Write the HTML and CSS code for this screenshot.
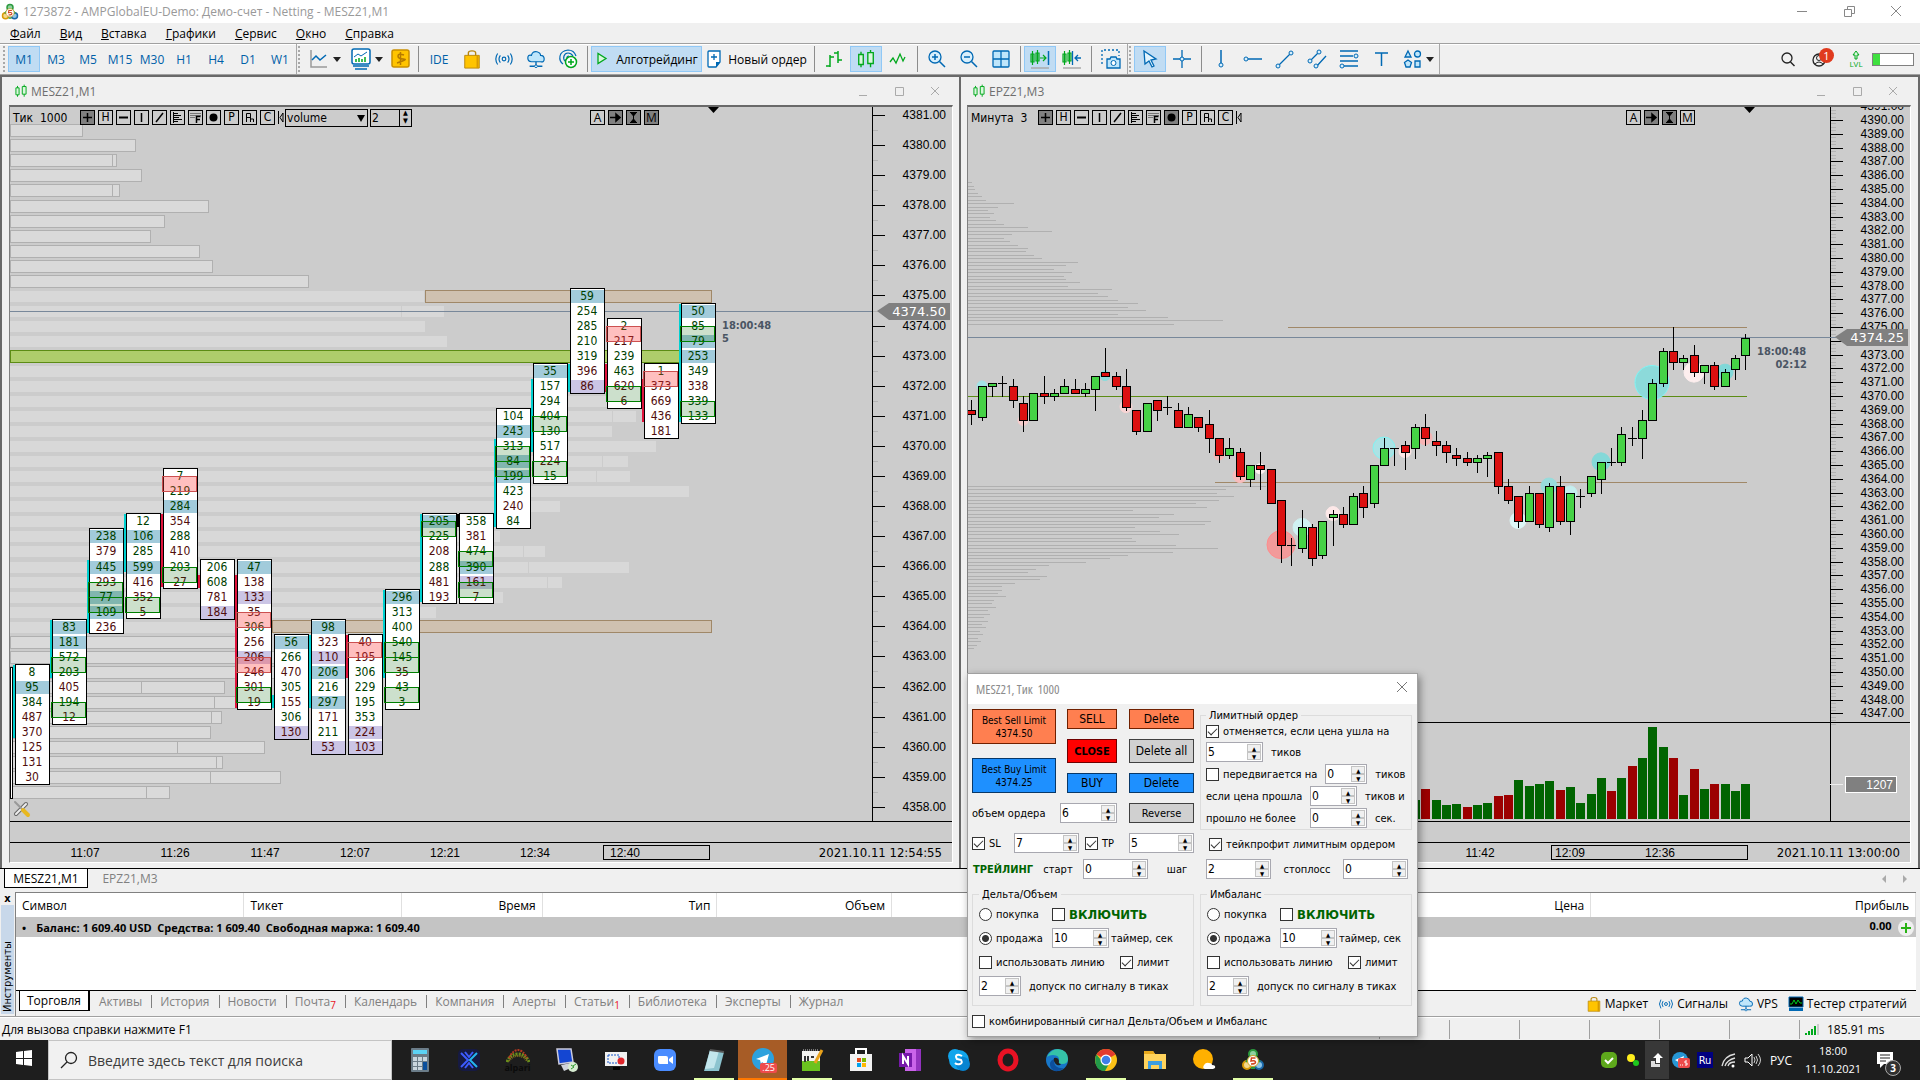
FILE: index.html
```html
<!DOCTYPE html>
<html lang="ru">
<head>
    <meta charset="UTF-8">
    <title>1273872 - AMPGlobalEU-Demo: Демо-счет - Netting - MESZ21,M1</title>
    <link rel="stylesheet" href="styles.css">
</head>
<body>
<svg class="defs" aria-hidden="true">
    <symbol id="i-candles" viewBox="0 0 22 22"><path d="M3 6h5v11H3zM5.500 3v3m0 11v3M13 4h6v12h-6zM16 1v3m0 12v4" fill="#d9f7dc" stroke="#00a81c" stroke-width="1.500"/></symbol>
    <symbol id="i-bag" viewBox="0 0 22 22"><path d="M7 8V4q0-2 4-2t4 2v4" fill="none" stroke="#b8860b" stroke-width="1.500"/><path d="M3 7h16v14H3z" fill="#ffc400" stroke="#b8860b"/><path d="M17 7v14" stroke="#d99b00" stroke-width="2"/></symbol>
    <symbol id="i-signal" viewBox="0 0 22 22"><g fill="none" stroke="#0069b4" stroke-width="1.300"><circle cx="11" cy="11" r="2"/><path d="M7 7q-3 4 0 8M15 7q3 4 0 8M4 5q-4 6 0 12M18 5q4 6 0 12"/></g></symbol>
    <symbol id="i-cloud" viewBox="0 0 22 22"><path d="M6 14q-4 0-4-4t4-3q1-5 6-4 4 1 4 4 4 0 4 4t-4 3z" fill="#bfe6fb" stroke="#0069b4" stroke-width="1.300"/><path d="M11 14v4M4 19h14" stroke="#0069b4" stroke-width="1.500"/><circle cx="11" cy="19" r="1.500" fill="#fff" stroke="#0069b4"/></symbol>
    <symbol id="i-mt5" viewBox="0 0 24 24"><circle cx="12" cy="6" r="4" fill="#8fd0a0" stroke="#2c9a3f" stroke-width="2"/><circle cx="6" cy="17" r="4" fill="#f4d98c" stroke="#d99a07" stroke-width="2"/><circle cx="18" cy="17" r="4" fill="#8cc4e8" stroke="#1a68a8" stroke-width="2"/><path d="M9 9l-4 5M15 9l4 5M10 20h4" stroke="#2c9a3f" stroke-width="2"/><circle cx="12" cy="13" r="5.500" fill="#fff" stroke="#c9a227"/><path d="M14.500 10h-4l-.5 3q4-1 4.500 1t-4.500 2" fill="none" stroke="#d2451e" stroke-width="1.500"/></symbol>
</svg>

<header class="titlebar">
    <svg class="logo" width="18" height="18"><use href="#i-mt5"/></svg>
    <h1>1273872 - AMPGlobalEU-Demo: Демо-счет - Netting - MESZ21,M1</h1>
    <div class="win-buttons">
        <button aria-label="Свернуть"><svg width="11" height="11"><path d="M0 5.500h10" stroke="#888"/></svg></button>
        <button aria-label="Окно"><svg width="11" height="11"><path d="M.5 3.500h7v7h-7zM3.500 3V.5h7v7H8" fill="none" stroke="#888"/></svg></button>
        <button aria-label="Закрыть"><svg width="11" height="11"><path d="M0 0l10 10M10 0L0 10" stroke="#888"/></svg></button>
    </div>
</header>

<nav class="menu">
    <a href="#"><u>Ф</u>айл</a>
    <a href="#"><u>В</u>ид</a>
    <a href="#"><u>В</u>ставка</a>
    <a href="#"><u>Г</u>рафики</a>
    <a href="#"><u>С</u>ервис</a>
    <a href="#"><u>О</u>кно</a>
    <a href="#"><u>С</u>правка</a>
</nav>

<div class="toolbar">
    <span class="grip"></span>
    <button class="active">M1</button>
    <button>M3</button>
    <button>M5</button>
    <button>M15</button>
    <button>M30</button>
    <button>H1</button>
    <button>H4</button>
    <button>D1</button>
    <button>W1</button>
    <span class="sep tight"></span>
    <span class="grip"></span>
    <button class="drop" aria-label="Тип линии"><svg width="22" height="22"><path d="M3 2v17h16" fill="none" stroke="#999" stroke-width="1.500"/><path d="M4 12l4-4 4 4 6-5" fill="none" stroke="#0069b4" stroke-width="1.500"/></svg><i class="caret"></i></button>
    <button class="drop" aria-label="Шаблоны"><svg width="22" height="22"><rect x="2" y="1" width="18" height="15" rx="2" fill="#fff" stroke="#0069b4" stroke-width="1.500"/><path d="M4 9l4-3 3 2 6-4" fill="none" stroke="#0069b4"/><path d="M6 14v-3m3 3v-4m3 4v-3m3 3V9" stroke="#00a81c" stroke-width="1.500"/><path d="M3 18h16M5 21h12" stroke="#0069b4" stroke-width="1.500"/></svg><i class="caret"></i></button>
    <button class="narrow" aria-label="Доллар"><svg width="20" height="20"><rect x="1" y="1" width="17" height="17" rx="2" fill="#ffc400" stroke="#c98f00" stroke-width="1.500"/><path d="M13 6q-6-2-6 1t5.500 3-6.500 4M9.500 3v13" fill="none" stroke="#b57a00" stroke-width="1.500"/></svg></button>
    <span class="sep"></span>
    <button class="wide">IDE</button>
    <button aria-label="Маркет"><svg width="20" height="20"><use href="#i-bag"/></svg></button>
    <button aria-label="Сигналы"><svg width="20" height="20"><use href="#i-signal"/></svg></button>
    <button aria-label="VPS"><svg width="20" height="20"><use href="#i-cloud"/></svg></button>
    <button aria-label="Радар"><svg width="22" height="22"><g fill="none" stroke="#0069b4" stroke-width="1.200"><path d="M6 16Q2 13 3 8t8-6q6 0 8 6M8 13q-2-2-1-5t4-3q3 0 5 3M10 10q0-2 2-2"/></g><circle cx="14" cy="14" r="5.500" fill="#fff" stroke="#00a81c" stroke-width="1.500"/><path d="M14 11v6M11 14h6" stroke="#00a81c" stroke-width="1.500"/></svg></button>
    <span class="sep"></span>
    <button class="active text"><svg width="14" height="14"><path d="M3 1.500v10l8-5z" fill="#d9f7dc" stroke="#00a81c" stroke-width="1.300"/></svg>Алготрейдинг</button>
    <button class="text new-order"><svg width="18" height="20"><path d="M2 3q0-1 1-1h11v11l-4 5H3q-1 0-1-1z" fill="#fff" stroke="#0069b4" stroke-width="1.300"/><path d="M14 13l-4 5v-5z" fill="#0069b4"/><path d="M8 5v6M5 8h6" stroke="#0069b4" stroke-width="1.300"/></svg>Новый ордер</button>
    <span class="sep"></span>
    <button aria-label="Бары"><svg width="20" height="20"><path d="M6 6v12M2 17h4M6 8h4M14 2v12M10 4h4M14 11h4" fill="none" stroke="#00a81c" stroke-width="1.500"/></svg></button>
    <button class="active" aria-label="Свечи"><svg width="20" height="20"><use href="#i-candles"/></svg></button>
    <button aria-label="Линия"><svg width="20" height="20"><path d="M2 13l3-4 3 5 4-9 3 7 2-4" fill="none" stroke="#00a81c" stroke-width="1.300"/></svg></button>
    <span class="sep"></span>
    <button aria-label="Увеличить"><svg width="20" height="20"><circle cx="8" cy="8" r="6" fill="#d8effc" stroke="#0069b4" stroke-width="1.300"/><path d="M12.500 12.500L18 18M8 5v6M5 8h6" stroke="#0069b4" stroke-width="1.500"/></svg></button>
    <button aria-label="Уменьшить"><svg width="20" height="20"><circle cx="8" cy="8" r="6" fill="#d8effc" stroke="#0069b4" stroke-width="1.300"/><path d="M12.500 12.500L18 18M5 8h6" stroke="#0069b4" stroke-width="1.500"/></svg></button>
    <button aria-label="Плитка"><svg width="20" height="20"><rect x="2" y="2" width="16" height="16" rx="1" fill="#bfe6fb" stroke="#0069b4" stroke-width="1.300"/><path d="M10 2v16M2 10h16" stroke="#0069b4" stroke-width="1.300"/></svg></button>
    <span class="sep"></span>
    <button class="active" aria-label="Автопрокрутка"><svg width="20" height="22"><path d="M1 6h3v8H1zM2.500 3v14M6 5h3v8H6zM7.500 2v14M10 10h6m-3-3l3 3-3 3" fill="none" stroke="#00a81c" stroke-width="1.200"/><path d="M18.500 3v14" stroke="#0069b4" stroke-width="1.500"/><path d="M1 20h18" stroke="#aaa" stroke-width="1.500"/></svg></button>
    <button aria-label="Сдвиг"><svg width="20" height="22"><path d="M1 6h3v8H1zM2.500 3v14M6 5h3v8H6zM7.500 2v14" fill="none" stroke="#00a81c" stroke-width="1.200"/><path d="M10.500 3v14M19 10h-6m3-3l-3 3 3 3" fill="none" stroke="#0069b4" stroke-width="1.300"/><path d="M1 20h18" stroke="#aaa" stroke-width="1.500"/></svg></button>
    <span class="sep"></span>
    <button aria-label="Снимок"><svg width="22" height="22"><path d="M2 16V2h17v6" fill="none" stroke="#0069b4" stroke-width="1.300" stroke-dasharray="2 2"/><path d="M7 11h3l1-2h5l1 2h3v9H7z" fill="#bfe6fb" stroke="#0069b4" stroke-width="1.300"/><circle cx="13.500" cy="15" r="2.500" fill="#fff" stroke="#0069b4"/></svg></button>
    <span class="sep tight"></span>
    <span class="grip"></span>
    <button class="active" aria-label="Курсор"><svg width="20" height="20"><path d="M4 2l12 8-5 1 3 6-2 1-3-6-4 3z" fill="#e3f4fd" stroke="#0069b4" stroke-width="1.300"/></svg></button>
    <button aria-label="Перекрестие"><svg width="20" height="20"><path d="M10 1v18M1 10h18" stroke="#0069b4" stroke-width="1.300"/><circle cx="10" cy="10" r="2" fill="#d8effc" stroke="#0069b4"/></svg></button>
    <span class="sep"></span>
    <button aria-label="Вертикальная линия"><svg width="20" height="20"><path d="M10 1v14" stroke="#0069b4" stroke-width="1.500"/><circle cx="10" cy="16" r="2" fill="#d8effc" stroke="#0069b4"/></svg></button>
    <button aria-label="Горизонтальная линия"><svg width="20" height="20"><path d="M5 10h14" stroke="#0069b4" stroke-width="1.500"/><circle cx="3" cy="10" r="2" fill="#d8effc" stroke="#0069b4"/></svg></button>
    <button aria-label="Трендовая линия"><svg width="20" height="20"><path d="M3 17L17 3" stroke="#0069b4" stroke-width="1.300"/><circle cx="3" cy="17" r="2" fill="#d8effc" stroke="#0069b4"/><circle cx="16" cy="4" r="2" fill="#d8effc" stroke="#0069b4"/></svg></button>
    <button aria-label="Канал"><svg width="20" height="20"><path d="M3 12l9-9M9 18L19 7" stroke="#0069b4" stroke-width="1.300"/><g fill="#d8effc" stroke="#0069b4"><circle cx="3" cy="12" r="2"/><circle cx="12" cy="3" r="2"/><circle cx="9" cy="17" r="2"/></g></svg></button>
    <button aria-label="Фибоначчи"><svg width="20" height="20"><path d="M1 2h18M1 7h13M1 12h18M5 17h14" stroke="#0069b4" stroke-width="1.300"/><circle cx="17" cy="7" r="2" fill="#d8effc" stroke="#0069b4"/><circle cx="3" cy="17" r="2" fill="#d8effc" stroke="#0069b4"/></svg></button>
    <button aria-label="Текст"><svg width="20" height="20"><path d="M4 4h13M10.500 4v13" stroke="#0069b4" stroke-width="1.500"/></svg></button>
    <button class="drop" aria-label="Объекты"><svg width="20" height="20"><g fill="#bfe6fb" stroke="#0069b4" stroke-width="1.300"><path d="M5 2l3 6H2z"/><circle cx="14.500" cy="5" r="3"/><path d="M5 11l3.500 2.500L7 18H3l-1.500-4.500z"/><path d="M12 12h5v6h-5z"/></g></svg><i class="caret"></i></button>
    <span class="sep tight"></span>
    <div class="toolbar-right">
        <button aria-label="Поиск"><svg width="16" height="16"><circle cx="7" cy="7" r="5" fill="none" stroke="#222" stroke-width="1.300"/><path d="M10.500 11l4 4" stroke="#222" stroke-width="1.500"/></svg></button>
        <button class="account" aria-label="Аккаунт"><svg width="18" height="18"><circle cx="8" cy="10" r="6" fill="none" stroke="#222" stroke-width="1.300"/><circle cx="8" cy="8" r="2.500" fill="none" stroke="#222"/><path d="M4 14q4-4 8 0" fill="none" stroke="#222"/></svg><b class="badge">1</b></button>
        <div class="lvl"><svg width="10" height="10"><path d="M5 1l3 4H6v4H4V5H2z" fill="#d9f7dc" stroke="#00a81c"/></svg><span>LVL</span></div>
        <div class="meter"><i></i></div>
    </div>
</div>

<main class="workspace">
    <section class="chart-window">
        <header class="chart-title">
            <svg width="14" height="16"><use href="#i-candles"/></svg><h2>MESZ21,M1</h2>
            <div class="win-buttons small">
                <button aria-label="Свернуть"><svg width="9" height="10"><path d="M0 9.500h8" stroke="#aaa"/></svg></button>
                <button aria-label="Развернуть"><svg width="9" height="10"><path d="M.5 1.500h8v8h-8z" fill="none" stroke="#aaa"/></svg></button>
                <button aria-label="Закрыть"><svg width="9" height="10"><path d="M0 1l8 8M8 1L0 9" stroke="#aaa"/></svg></button>
            </div>
        </header>
        <div class="chart">
            <div class="chart-tools">
                <span class="tf-label">Тик&nbsp; 1000</span>
                <span class="chips" data-chips="left"></span>
                <span class="select"><select aria-label="Режим"><option>volume</option></select></span>
                <span class="spin flat"><input type="number" value="2" aria-label="Значение"><span class="arrows"><button aria-label="Больше">▲</button><button aria-label="Меньше">▼</button></span></span>
            </div>
            <div class="chips modes" data-chips="modes-left"></div>
            <svg class="plot" id="plot-left"></svg>
            <svg class="axis" id="axis-left"></svg>
            <div class="spacer"></div>
            <div class="timeline"><svg id="time-left"></svg><time>2021.10.11 12:54:55</time></div>
        </div>
    </section>
    <section class="chart-window">
        <header class="chart-title">
            <svg width="14" height="16"><use href="#i-candles"/></svg><h2>EPZ21,M3</h2>
            <div class="win-buttons small">
                <button aria-label="Свернуть"><svg width="9" height="10"><path d="M0 9.500h8" stroke="#aaa"/></svg></button>
                <button aria-label="Развернуть"><svg width="9" height="10"><path d="M.5 1.500h8v8h-8z" fill="none" stroke="#aaa"/></svg></button>
                <button aria-label="Закрыть"><svg width="9" height="10"><path d="M0 1l8 8M8 1L0 9" stroke="#aaa"/></svg></button>
            </div>
        </header>
        <div class="chart">
            <div class="chart-tools">
                <span class="tf-label">Минута&nbsp; 3</span>
                <span class="chips" data-chips="right"></span>
            </div>
            <div class="chips modes" data-chips="modes-right"></div>
            <svg class="plot" id="plot-right"></svg>
            <svg class="axis" id="axis-right"></svg>
            <div class="spacer"></div>
            <div class="timeline"><svg id="time-right"></svg><time>2021.10.11 13:00:00</time></div>
        </div>
    </section>
</main>

<div class="chart-tabs">
    <button class="current">MESZ21,M1</button>
    <button>EPZ21,M3</button>
    <span class="scroll"><i></i><i></i></span>
</div>

<section class="toolbox">
    <aside><button aria-label="Закрыть">x</button><span>Инструменты</span></aside>
    <div class="toolbox-main">
        <table>
            <thead>
            <tr>
                <th class="left w-symbol">Символ</th>
                <th class="left w-ticket">Тикет</th>
                <th class="w-time">Время</th>
                <th class="w-col">Тип</th>
                <th class="w-col">Объем</th>
                <th class="w-col"></th>
                <th class="w-col"></th>
                <th class="w-col"></th>
                <th class="w-col">Цена</th>
                <th>Прибыль</th>
            </tr>
            </thead>
            <tbody>
            <tr>
                <td colspan="9"><span class="bullet">•</span>Баланс: 1 609.40 USD&nbsp; Средства: 1 609.40&nbsp; Свободная маржа: 1 609.40</td>
                <td class="profit">0.00<button aria-label="Добавить"><svg width="16" height="16"><circle cx="8" cy="8" r="8" fill="#efefef"/><path d="M8 3v10M3 8h10" stroke="#28b314" stroke-width="2"/></svg></button></td>
            </tr>
            </tbody>
        </table>
        <div class="toolbox-tabs">
            <button class="current">Торговля</button>
            <button>Активы</button>
            <button>История</button>
            <button>Новости</button>
            <button>Почта<sub>7</sub></button>
            <button>Календарь</button>
            <button>Компания</button>
            <button>Алерты</button>
            <button>Статьи<sub>1</sub></button>
            <button>Библиотека</button>
            <button>Эксперты</button>
            <button>Журнал</button>
            <div class="services">
                <a href="#"><svg width="16" height="16"><use href="#i-bag"/></svg>Маркет</a>
                <a href="#"><svg width="16" height="16"><use href="#i-signal"/></svg>Сигналы</a>
                <a href="#"><svg width="16" height="16"><use href="#i-cloud"/></svg>VPS</a>
                <a href="#"><svg width="16" height="16"><path d="M1 1h14v10H1z" fill="#000" stroke="#0069b4"/><path d="M2 8h2l2-4 2 4 2-4 2 3h2" fill="none" stroke="#00c81c"/><path d="M1 12h14v3H1z" fill="#0069b4"/></svg>Тестер стратегий</a>
            </div>
        </div>
    </div>
</section>

<footer class="statusbar">
    <span>Для вызова справки нажмите F1</span>
    <div class="cells"><i></i><i></i><i></i><i></i><i></i><i></i><i class="ping"><svg width="14" height="11"><path d="M1 11V9m3 2V7m3 4V5m3 6V2" stroke="#00a81c" stroke-width="2"/><path d="M13 11V0" stroke="#ccc" stroke-width="2"/></svg>185.91 ms</i></div>
</footer>

<div class="taskbar">
    <button class="start" aria-label="Пуск"><svg width="16" height="16"><path d="M0 2l7-1v7H0zM8 1l8-1v8H8zM0 9h7v6l-7-1zM8 9h8v7l-8-1z" fill="#fff"/></svg></button>
    <label class="search"><svg width="18" height="18"><circle cx="11" cy="7" r="5.500" fill="none" stroke="#222" stroke-width="1.300"/><path d="M7 11l-6 6" stroke="#222" stroke-width="1.300"/></svg><input type="text" placeholder="Введите здесь текст для поиска" aria-label="Поиск"></label>
    <div class="apps">
        <button aria-label="Калькулятор"><svg width="24" height="24"><rect x="3" y="0" width="18" height="24" rx="1" fill="#6b7c88"/><path d="M5 2h14v4H5z" fill="#5cd3f5"/><path d="M5 9h4v4H5zm5 0h4v4h-4zm5 0h4v4h-4zM5 14h4v4H5zm5 0h4v4h-4zM5 19h4v3H5zm5 0h4v3h-4z" fill="#c9d6de"/><path d="M15 14h4v8h-4z" fill="#0a4f9c"/></svg></button>
        <button aria-label="X"><svg width="24" height="24"><rect x="1" y="1" width="22" height="22" rx="5" fill="#161a42"/><path d="M4 5l7 7-7 7M8 4l4 5 4-5M8 20l4-5 4 5" fill="none" stroke="#3d5cff" stroke-width="2"/><path d="M20 5l-7 7 7 7" fill="none" stroke="#24b6f0" stroke-width="2"/></svg></button>
        <button class="alpari" aria-label="alpari"><svg width="24" height="14"><path d="M1 13q3-8 11-8t11 8" fill="none" stroke="#6a8f1c" stroke-width="3" stroke-dasharray="2 1"/><path d="M3 12q3-5 9-5t9 5" fill="none" stroke="#8a7a1c" stroke-width="2" stroke-dasharray="1 1"/><path d="M3 9q4-8 9-8t9 8" fill="none" stroke="#b63a22" stroke-width="2" stroke-dasharray="2 1"/></svg><span>alpari</span></button>
        <button aria-label="Удаленный доступ"><svg width="24" height="24"><path d="M2 1h14l2 13-14 2z" fill="#1446d2" stroke="#ccd" stroke-width="1.500"/><path d="M6 17l10-2 2 4-9 4z" fill="#cfd4dc"/><circle cx="18" cy="19" r="5" fill="#d7ecd2"/><path d="M16 17l3 2-3 2M21 16l-3 2" stroke="#2f9b2f" fill="none"/></svg></button>
        <button aria-label="Запись экрана"><svg width="24" height="24"><rect x="1" y="4" width="22" height="14" fill="#f1f1f1"/><path d="M4 7h11v8H4z" fill="none" stroke="#1454c8" stroke-dasharray="2 1"/><circle cx="17" cy="13" r="3.500" fill="#e0262b"/><path d="M9 19h7v3H9z" fill="#000"/></svg></button>
        <button aria-label="Zoom"><svg width="24" height="24"><rect x="1" y="1" width="22" height="22" rx="6" fill="#4a8cff"/><path d="M5 9q0-1 1-1h7q2 0 2 2v6H7q-2 0-2-2zM16 11l4-3v8l-4-3z" fill="#fff"/></svg></button>
        <button class="running" aria-label="Блокнот"><svg width="24" height="24"><path d="M8 2l14 2-5 19H2z" fill="#8cc4cf"/><path d="M8 2l9 1-5 17-9 1z" fill="#c3e6ec"/><path d="M8 2l14 2" stroke="#555" stroke-width="2"/></svg></button>
        <button class="alert" aria-label="Telegram"><svg width="24" height="24"><circle cx="12" cy="12" r="11" fill="#2da1dd"/><path d="M5 12l13-5-3 11-4-3-1 2-1-4z" fill="#fff"/></svg><b>.25</b></button>
        <button class="running" aria-label="Редактор"><svg width="24" height="24"><path d="M2 3h18v20H2z" fill="#f4f4f0"/><path d="M2 13h18v10H2z" fill="#6bc21f"/><path d="M5 8v6m3-6v5m3-4h3" stroke="#333" stroke-width="2"/><path d="M22 2l-7 13" stroke="#e9a21b" stroke-width="3"/><path d="M3 2h16" stroke="#777" stroke-dasharray="1 1" stroke-width="2"/></svg></button>
        <button aria-label="Store"><svg width="24" height="24"><path d="M7 6V1h10v5" fill="none" stroke="#fff" stroke-width="2"/><path d="M1 6h22v17H1z" fill="#f2f2f2"/><path d="M8 10h4v4H8z" fill="#e74c1c"/><path d="M13 10h4v4h-4z" fill="#7ab800"/><path d="M8 15h4v4H8z" fill="#00a3ee"/><path d="M13 15h4v4h-4z" fill="#ffb800"/></svg></button>
        <button aria-label="OneNote"><svg width="24" height="24"><path d="M7 1h16v22H7z" fill="#ca64ea"/><path d="M18 1h5v22h-5z" fill="#9332bf"/><path d="M1 5h13v14H1z" fill="#7719aa"/><path d="M5 16V8l5 8V8" fill="none" stroke="#fff" stroke-width="2"/></svg></button>
        <button aria-label="Skype"><svg width="24" height="24"><circle cx="12" cy="12" r="10" fill="#11a5ec"/><circle cx="8" cy="8" r="7" fill="#11a5ec"/><circle cx="16" cy="16" r="7" fill="#0784d1"/><path d="M15 8q-3-2-5-1t0 4l4 1q2 3-1 4t-5-1" fill="none" stroke="#fff" stroke-width="2"/></svg></button>
        <button aria-label="Opera"><svg width="24" height="24"><ellipse cx="12" cy="12" rx="8" ry="9" fill="none" stroke="#e81224" stroke-width="5"/></svg></button>
        <button aria-label="Edge"><svg width="24" height="24"><circle cx="12" cy="12" r="11" fill="#1877c9"/><path d="M2 9Q6 1 13 1q10 1 10 10 0 5-6 5-4 0-3-3 1-6-6-6-4 0-6 2z" fill="#35c3a8"/><path d="M9 14q1 7 10 6-4 4-9 3-6-3-5-8 1-3 4-4z" fill="#0c4f9e"/><path d="M9 10q4-1 5 3-1 3 2 3-1 2-4 1-4-3-3-7z" fill="#202020"/></svg></button>
        <button class="running" aria-label="Chrome"><svg width="24" height="24"><circle cx="12" cy="12" r="11" fill="#fbc116"/><path d="M12 12L2.500 6.500Q6 1 12 1t9.500 5.500z" fill="#e33b2e"/><path d="M12 12l-5 0-4.500-5.500Q0 11 2 17t9 6l5-9z" fill="#229a49"/><circle cx="12" cy="12" r="5.500" fill="#fff"/><circle cx="12" cy="12" r="4.300" fill="#3f7fe8"/></svg></button>
        <button aria-label="Проводник"><svg width="24" height="24"><path d="M1 3h9l2 3h11v15H1z" fill="#ffd35c"/><path d="M1 3h9l2 3H1z" fill="#e8a91c"/><path d="M5 21v-8h14v8h-3v-4H8v4z" fill="#3e9ee0"/></svg></button>
        <button aria-label="Погода"><svg width="24" height="24"><circle cx="11" cy="11" r="10" fill="#ffb000"/><path d="M13 21q-3-1-1-4 2-3 5-2 3 0 3 2 4 0 3 3l-2 1z" fill="#fff"/></svg></button>
        <button class="running" aria-label="MetaTrader 5"><svg width="24" height="24"><use href="#i-mt5"/></svg></button>
    </div>
    <div class="tray">
        <button aria-label="Защита"><svg width="16" height="16"><rect width="16" height="16" rx="5" fill="#5ea81c"/><path d="M4 8l3 3 5-5" fill="none" stroke="#fff" stroke-width="2"/></svg></button>
        <button aria-label="ICQ"><svg width="16" height="16"><circle cx="6" cy="6" r="4" fill="#ffee1c"/><circle cx="11" cy="11" r="3" fill="#1ec81e"/></svg></button>
        <button class="lit" aria-label="Извлечение"><svg width="16" height="16"><path d="M9 1l5 5h-3v5H7V6H4z" fill="#fff"/><path d="M2 9h4v3h5v3H2z" fill="#ddd"/></svg></button>
        <button aria-label="Telegram"><svg width="18" height="16"><circle cx="8" cy="8" r="8" fill="#2796d4"/><path d="M3 8l9-4-2 8z" fill="#fff"/><rect x="6" y="6" width="12" height="10" rx="2" fill="#ee4b4b"/><path d="M8 13h1m1 0h1m4-4h-2v2h2v2h-2" fill="none" stroke="#fff"/></svg></button>
        <button class="ru">Ru</button>
        <button aria-label="Сеть"><svg width="16" height="16"><path d="M1 14Q3 4 14 2M4 14Q6 8 14 6M7 14q1-4 7-4" fill="none" stroke="#ddd" stroke-width="1.300"/><circle cx="12" cy="14" r="1.500" fill="#fff"/></svg></button>
        <button aria-label="Звук"><svg width="18" height="16"><path d="M1 6h3l4-4v12l-4-4H1z" fill="none" stroke="#fff"/><path d="M10 5q2 3 0 6M12 4q3 4 0 8M14 2q5 6 0 12" fill="none" stroke="#ccc"/></svg></button>
        <span class="lang">РУС</span>
        <time><span>18:00</span><span>11.10.2021</span></time>
        <button class="notes" aria-label="Уведомления"><svg width="18" height="18"><path d="M1 1h16v12H8l-4 4v-4H1z" fill="#fff"/><path d="M4 4h10M4 7h10M4 10h6" stroke="#222"/></svg><b>3</b></button>
    </div>
</div>

<form class="dialog">
    <header><h2>MESZ21, Тик&nbsp; 1000</h2><button type="button" aria-label="Закрыть"><svg width="11" height="11"><path d="M0 0l10 10M10 0L0 10" stroke="#777"/></svg></button></header>
    <div class="panels">
        <div class="orders">
            <div class="buttons">
                <div class="col best">
                    <button type="button" class="sell">Best Sell Limit<br>4374.50</button>
                    <button type="button" class="buy">Best Buy Limit<br>4374.25</button>
                </div>
                <div class="col market">
                    <button type="button" class="sell">SELL</button>
                    <button type="button" class="close">CLOSE</button>
                    <button type="button" class="buy">BUY</button>
                </div>
                <div class="col delete">
                    <button type="button" class="sell">Delete</button>
                    <button type="button" class="tall">Delete all</button>
                    <button type="button" class="buy">Delete</button>
                </div>
            </div>
            <div class="line volume">
                <label for="vol">объем ордера</label>
                <span class="spin w57"><input type="number" id="vol" value="6"><span class="arrows"><button type="button">▲</button><button type="button">▼</button></span></span>
                <button type="button" class="reverse">Reverse</button>
            </div>
            <div class="stops">
                <label><input type="checkbox" checked>SL</label>
                <span class="spin"><input type="number" value="7" aria-label="SL"><span class="arrows"><button type="button">▲</button><button type="button">▼</button></span></span>
                <label class="tp"><input type="checkbox" checked>TP</label>
                <span class="spin"><input type="number" value="5" aria-label="TP"><span class="arrows"><button type="button">▲</button><button type="button">▼</button></span></span>
            </div>
        </div>
        <div class="limits">
            <fieldset>
                <legend>Лимитный ордер</legend>
                <label><input type="checkbox" checked>отменяется, если цена ушла на</label>
                <div class="line"><span class="spin w57"><input type="number" id="t1" value="5"><span class="arrows"><button type="button">▲</button><button type="button">▼</button></span></span><label for="t1">тиков</label></div>
                <div class="line"><label><input type="checkbox">передвигается на</label><span class="spin w42"><input type="number" id="t2" value="0"><span class="arrows"><button type="button">▲</button><button type="button">▼</button></span></span><label for="t2">тиков</label></div>
                <div class="line"><label for="t3" class="pre">если цена прошла</label><span class="spin w47"><input type="number" id="t3" value="0"><span class="arrows"><button type="button">▲</button><button type="button">▼</button></span></span><span>тиков и</span></div>
                <div class="line"><label for="t4" class="pre">прошло не более</label><span class="spin w57"><input type="number" id="t4" value="0"><span class="arrows"><button type="button">▲</button><button type="button">▼</button></span></span><span>сек.</span></div>
            </fieldset>
            <label class="take"><input type="checkbox" checked>тейкпрофит лимитным ордером</label>
        </div>
    </div>
    <div class="trailing">
        <b>ТРЕЙЛИНГ</b>
        <label for="start">старт</label>
        <span class="spin"><input type="number" id="start" value="0"><span class="arrows"><button type="button">▲</button><button type="button">▼</button></span></span>
        <label for="step">шаг</label>
        <span class="spin"><input type="number" id="step" value="2"><span class="arrows"><button type="button">▲</button><button type="button">▼</button></span></span>
        <label for="stop">стоплосс</label>
        <span class="spin"><input type="number" id="stop" value="0"><span class="arrows"><button type="button">▲</button><button type="button">▼</button></span></span>
    </div>
    <div class="panels signals">
        <fieldset>
            <legend>Дельта/Объем</legend>
            <div class="line"><label class="c1"><input type="radio" name="delta">покупка</label><label class="on"><input type="checkbox">ВКЛЮЧИТЬ</label></div>
            <div class="line"><label class="c1"><input type="radio" name="delta" checked>продажа</label><span class="spin w57"><input type="number" id="tm1" value="10"><span class="arrows"><button type="button">▲</button><button type="button">▼</button></span></span><label for="tm1" class="near">таймер, сек</label></div>
            <div class="line"><label class="c2"><input type="checkbox">использовать линию</label><label><input type="checkbox" checked>лимит</label></div>
            <div class="line"><span class="spin w42"><input type="number" id="d1" value="2"><span class="arrows"><button type="button">▲</button><button type="button">▼</button></span></span><label for="d1">допуск по сигналу в тиках</label></div>
        </fieldset>
        <fieldset>
            <legend>Имбаланс</legend>
            <div class="line"><label class="c1"><input type="radio" name="imb">покупка</label><label class="on"><input type="checkbox">ВКЛЮЧИТЬ</label></div>
            <div class="line"><label class="c1"><input type="radio" name="imb" checked>продажа</label><span class="spin w57"><input type="number" id="tm2" value="10"><span class="arrows"><button type="button">▲</button><button type="button">▼</button></span></span><label for="tm2" class="near">таймер, сек</label></div>
            <div class="line"><label class="c2"><input type="checkbox">использовать линию</label><label><input type="checkbox" checked>лимит</label></div>
            <div class="line"><span class="spin w42"><input type="number" id="d2" value="2"><span class="arrows"><button type="button">▲</button><button type="button">▼</button></span></span><label for="d2">допуск по сигналу в тиках</label></div>
        </fieldset>
    </div>
    <label class="combined"><input type="checkbox">комбинированный сигнал Дельта/Объем и Имбаланс</label>
</form>

<script src="script.js"></script>
</body>
</html>
```
FILE: styles.css
```css
* {
    box-sizing: border-box;
}

body {
    margin: 0;
    height: 100vh;
    display: flex;
    flex-direction: column;
    overflow: hidden;
    background: #f0f0f0;
    font-family: "Open Sans", "Noto Sans", sans-serif;
    font-size: 12px;
    color: #000;
}

h1, h2 {
    margin: 0;
    font-size: 12px;
    font-weight: normal;
}

button, input, select {
    font-family: inherit;
    font-size: inherit;
    color: inherit;
}

button {
    padding: 0;
    border: none;
    background: none;
}

a {
    color: inherit;
    text-decoration: none;
}

.defs {
    position: absolute;
    width: 0;
    height: 0;
}

/* window title and menu */
.titlebar {
    display: flex;
    align-items: center;
    height: 23px;
    padding-left: 1px;
    background: #fff;
    color: #999;
}

.titlebar h1 {
    margin-left: 4px;
}

.win-buttons {
    display: flex;
    align-items: center;
    gap: 36px;
    margin-left: auto;
    padding-right: 18px;
}

.win-buttons button {
    display: flex;
}

.win-buttons.small {
    gap: 27px;
    padding-right: 13px;
}

.menu {
    display: flex;
    align-items: center;
    gap: 19px;
    height: 20px;
    padding-left: 10px;
}

/* toolbar */
.toolbar {
    display: flex;
    align-items: center;
    height: 32px;
    padding-left: 2px;
    border-top: 1px solid #a0a0a0;
    border-bottom: 1px solid #a0a0a0;
    box-shadow: inset 0 1px #fff;
    color: #0060a8;
}

.toolbar button {
    display: flex;
    align-items: center;
    justify-content: center;
    width: 32px;
    height: 26px;
    flex: none;
}

.toolbar button.active {
    background: #c0dcf3;
    border: 1px solid #90c8f6;
}

.toolbar .drop {
    width: 42px;
    gap: 3px;
}

.toolbar .narrow {
    width: 28px;
}

.toolbar .wide {
    width: 34px;
}

.toolbar .text {
    width: 111px;
    gap: 7px;
    color: #000;
}

.toolbar .new-order {
    width: 109px;
    gap: 4px;
}

.grip {
    width: 3px;
    height: 26px;
    margin: 0 2px 0 1px;
    border-left: 2px dotted #a8a8a8;
}

.sep {
    width: 1px;
    height: 26px;
    margin: 0 3px;
    background: #8c8c8c;
}

.sep.tight {
    height: 30px;
    margin: 0;
    background: #a8a8a8;
}

.caret {
    border: 4px solid transparent;
    border-top: 5px solid #222;
    border-bottom: none;
}

.toolbar-right {
    display: flex;
    align-items: center;
    margin-left: auto;
    padding-right: 6px;
}

.account {
    position: relative;
}

.badge {
    position: absolute;
    left: 15px;
    top: 2px;
    width: 15px;
    height: 15px;
    border-radius: 50%;
    background: #e03a1e;
    color: #fff;
    font-size: 11px;
    font-weight: normal;
    line-height: 15px;
}

.lvl {
    display: flex;
    flex-direction: column;
    align-items: center;
    width: 16px;
    margin: 0 8px 0 12px;
    color: #00a81c;
    font-size: 8px;
    line-height: 8px;
}

.meter {
    width: 42px;
    height: 13px;
    border: 1px solid #808080;
    background: #fff;
}

.meter i {
    display: block;
    width: 7px;
    height: 11px;
    background: #3fe03f;
}

/* charts */
.workspace {
    display: grid;
    grid-template-columns: 1fr 1fr;
    gap: 2px;
    flex: 1;
    min-height: 0;
    padding: 2px 2px 0 2px;
    background: #696969;
}

.chart-window {
    display: flex;
    flex-direction: column;
    min-width: 0;
    padding: 0 6px 5px 7px;
    background: #f0f0f0;
}

.chart-window + .chart-window {
    padding: 0 7px 5px 6px;
}

.chart-title {
    display: flex;
    align-items: center;
    height: 28px;
    padding-left: 5px;
    color: #6e6e6e;
}

.chart-title h2 {
    margin-left: 3px;
}

.chart {
    position: relative;
    display: grid;
    grid-template-columns: 1fr 80px;
    grid-template-rows: 1fr 21px 20px;
    flex: 1;
    min-height: 0;
    border: 1px solid #808080;
    border-top: 2px solid #696969;
    border-right-color: #fff;
    border-bottom-color: #fff;
    background: #cccccc;
}

.plot, .axis {
    width: 100%;
    height: 100%;
    overflow: hidden;
}

.spacer, .timeline {
    grid-column: 1 / 3;
    border-top: 1px solid #000;
}

.timeline {
    display: flex;
    justify-content: space-between;
    align-items: center;
    padding-right: 10px;
}

.timeline svg {
    width: 785px;
    height: 19px;
}

.timeline time {
    font-family: "DejaVu Sans Condensed", "DejaVu Sans", sans-serif;
    font-stretch: condensed;
    font-size: 13px;
}

.chart text {
    font-family: "Liberation Sans", Arial, sans-serif;
    font-size: 12px;
}

.chart text.cell {
    font-family: "DejaVu Sans Condensed", "DejaVu Sans", sans-serif;
    font-stretch: condensed;
    text-anchor: middle;
}

.chart text.clock {
    font-family: "DejaVu Sans Condensed", "DejaVu Sans", sans-serif;
    font-stretch: condensed;
    font-size: 11px;
    font-weight: bold;
    fill: #4a5563;
}

.chart text.end {
    text-anchor: end;
}

.chart text.mid {
    text-anchor: middle;
}

.chart text.tag {
    font-family: "DejaVu Sans", sans-serif;
    font-size: 13px;
    fill: #fff;
    text-anchor: end;
}

.chart-tools {
    position: absolute;
    left: 3px;
    top: 2px;
    display: flex;
    align-items: center;
    gap: 2px;
    height: 17px;
    font-family: "DejaVu Sans Condensed", "DejaVu Sans", sans-serif;
    font-stretch: condensed;
}

.tf-label {
    width: 65px;
}

.chips {
    display: flex;
    gap: 3px;
}

.modes {
    position: absolute;
    right: 293px;
    top: 3px;
}

.modes[data-chips="modes-right"] {
    right: 215px;
}

.chips button {
    width: 15px;
    height: 15px;
    border: 1px solid #000;
    font-size: 12px;
    line-height: 13px;
    text-align: center;
}

.chips button.on {
    background: #808080;
}

.chips button svg {
    display: block;
    width: 13px;
    height: 13px;
}

.chips .fold {
    width: 5px;
    border: none;
}

.select {
    position: relative;
    display: flex;
}

.select::after {
    content: "";
    position: absolute;
    right: 3px;
    top: 6px;
    border: 4px solid transparent;
    border-top: 7px solid #000;
    border-bottom: none;
}

.chart-tools select {
    width: 83px;
    height: 18px;
    padding: 0 1px;
    border: 1px solid #000;
    border-radius: 0;
    background: none;
    appearance: none;
}

/* number box with two arrow buttons */
.spin {
    display: inline-flex;
    height: 20px;
    border: 1px solid #a8a8b0;
    background: #fff;
}

.spin input {
    flex: 1;
    min-width: 0;
    padding: 0 0 0 1px;
    border: none;
    outline: none;
    background: none;
    appearance: textfield;
}

.spin input::-webkit-inner-spin-button {
    display: none;
}

.arrows {
    display: flex;
    flex-direction: column;
    width: 14px;
    margin: 1px;
}

.arrows button {
    flex: 1;
    border: 1px solid #c4c4c4;
    background: #f0f0f0;
    font-size: 6px;
    line-height: 5px;
}

.spin.flat {
    width: 42px;
    height: 18px;
    border-color: #000;
    background: none;
}

.flat .arrows {
    width: 12px;
    margin: 0;
    border-left: 1px solid #000;
}

.flat .arrows button {
    border: none;
    background: none;
    font-size: 7px;
}

.w42 { width: 42px; }
.w47 { width: 47px; }
.w57 { width: 57px; }

/* chart tabs */
.chart-tabs {
    display: flex;
    align-items: center;
    height: 20px;
    padding-left: 4px;
    border-top: 1px solid #000;
    color: #808080;
}

.chart-tabs button {
    width: 84px;
    height: 19px;
}

.chart-tabs .current {
    border: 1px solid #000;
    border-top: none;
    background: #fff;
    color: #000;
}

.scroll {
    display: flex;
    gap: 17px;
    margin-left: auto;
    padding-right: 13px;
}

.scroll i {
    border: 4px solid transparent;
    border-left: none;
    border-right: 4px solid #aaa;
}

.scroll i + i {
    border: 4px solid transparent;
    border-right: none;
    border-left: 4px solid #aaa;
}

/* toolbox */
.toolbox {
    display: flex;
    height: 125px;
    margin-top: 4px;
    padding-right: 4px;
    border-bottom: 1px solid #a0a0a0;
}

.toolbox aside {
    display: flex;
    flex-direction: column;
    align-items: center;
    width: 15px;
    font-family: "DejaVu Sans Condensed", "DejaVu Sans", sans-serif;
    font-stretch: condensed;
    font-size: 11px;
}

.toolbox aside button {
    height: 13px;
    font-weight: bold;
    line-height: 10px;
}

.toolbox aside span {
    width: 13px;
    height: 109px;
    padding-top: 2px;
    background: #c8d8ea;
    line-height: 13px;
    writing-mode: vertical-rl;
    transform: rotate(180deg);
}

.toolbox-main {
    display: flex;
    flex-direction: column;
    flex: 1;
    border-top: 1px solid #808080;
    border-left: 1px solid #808080;
    background: #fff;
}

.toolbox table {
    width: 100%;
    border-collapse: collapse;
    table-layout: fixed;
}

.toolbox th {
    height: 24px;
    padding: 0 6px;
    border-right: 1px solid #e0e0e0;
    font-weight: normal;
    text-align: right;
}

.toolbox th.left {
    text-align: left;
}

.toolbox td {
    height: 20px;
    padding: 0 6px;
    background: #c4c4c4;
    font-size: 11px;
    font-weight: bold;
}

.toolbox td.profit {
    padding-right: 2px;
    text-align: right;
}

.bullet {
    margin-right: 10px;
}

.profit button {
    margin-left: 6px;
    vertical-align: middle;
}

.profit svg {
    display: block;
}

.w-symbol { width: 12%; }
.w-ticket { width: 8.300%; }
.w-time { width: 7.400%; }
.w-col { width: 9.200%; }

.toolbox-tabs {
    display: flex;
    height: 26px;
    margin-top: auto;
    padding-left: 3px;
    border-top: 1px solid #000;
    background: #f0f0f0;
    color: #808080;
}

.toolbox-tabs button {
    position: relative;
    height: 20px;
    padding: 0 9px;
}

.toolbox-tabs button + button + button::before {
    content: "";
    position: absolute;
    left: 0;
    top: 4px;
    height: 13px;
    border-left: 1px solid #808080;
}

.toolbox-tabs .current {
    padding: 0 7px;
    border: 1px solid #000;
    border-top: none;
    border-right-width: 2px;
    background: #fff;
    color: #000;
}

.toolbox-tabs sub {
    color: #e8141e;
    font-size: 10px;
    line-height: 8px;
}

.services {
    display: flex;
    align-items: center;
    gap: 10px;
    margin-left: auto;
    padding-right: 9px;
    color: #000;
}

.services a {
    display: flex;
    align-items: center;
    gap: 3px;
}

/* status bar */
.statusbar {
    display: flex;
    align-items: center;
    justify-content: space-between;
    height: 23px;
    padding-left: 2px;
    border-top: 1px solid #fff;
}

.cells {
    display: flex;
}

.cells i {
    display: flex;
    align-items: center;
    gap: 8px;
    width: 70px;
    height: 19px;
    border-left: 1px solid #a0a0a0;
    font-style: normal;
}

.cells .ping {
    width: 121px;
    padding-left: 5px;
}

/* taskbar */
.taskbar {
    display: flex;
    align-items: center;
    height: 40px;
    background: #1e1e1e;
    color: #fff;
}

.start {
    width: 48px;
}

.search {
    display: flex;
    align-items: center;
    gap: 8px;
    width: 344px;
    height: 40px;
    padding-left: 11px;
    border: 1px solid #c4c4c4;
    background: #f1f1f1;
    color: #222;
}

.search input {
    flex: 1;
    min-width: 0;
    border: none;
    outline: none;
    background: none;
    font-size: 14px;
}

.search input::placeholder {
    color: #3c3c3c;
}

.apps {
    display: flex;
    margin-left: 3px;
}

.apps button {
    position: relative;
    display: flex;
    flex-direction: column;
    align-items: center;
    justify-content: center;
    width: 49px;
    height: 40px;
}

.apps .running {
    background: linear-gradient(#e2ffa8, #e2ffa8) center bottom / 40px 2px no-repeat;
}

.apps .alert {
    background: #a75c26;
    border-bottom: 2px solid #ff7800;
}

.alert b {
    position: absolute;
    right: 10px;
    bottom: 5px;
    padding: 0 2px;
    border-radius: 2px;
    background: #ee4b4b;
    font-size: 9px;
    font-weight: normal;
    line-height: 10px;
}

.alpari span {
    color: #0b0b0b;
    font-size: 9px;
    font-weight: bold;
    line-height: 9px;
}

.tray {
    display: flex;
    align-items: center;
    margin-left: auto;
    padding-right: 20px;
}

.tray button {
    display: flex;
    align-items: center;
    justify-content: center;
    width: 24px;
    height: 38px;
}

.tray .lit {
    background: #383838;
}

.tray .ru {
    width: 16px;
    height: 16px;
    margin: 0 4px;
    background: #000080;
    font-family: "DejaVu Sans Condensed", "DejaVu Sans", sans-serif;
    font-stretch: condensed;
    font-size: 11px;
}

.lang {
    width: 30px;
    margin-left: 1px;
    text-align: center;
}

.tray time {
    display: flex;
    flex-direction: column;
    align-items: center;
    width: 74px;
    font-size: 11px;
    line-height: 18px;
}

.tray .notes {
    position: relative;
    width: 30px;
}

.notes b {
    position: absolute;
    right: -1px;
    bottom: 3px;
    width: 16px;
    height: 16px;
    border: 1px solid #aaa;
    border-radius: 50%;
    background: #303030;
    font-size: 10px;
    line-height: 14px;
}

/* order dialog */
.dialog {
    position: absolute;
    left: 967px;
    bottom: 43px;
    width: 451px;
    border: 1px solid #a0a0a0;
    background: #f0f0f0;
    box-shadow: 2px 3px 8px rgba(0, 0, 0, .4);
    font-family: "DejaVu Sans Condensed", "DejaVu Sans", sans-serif;
    font-stretch: condensed;
    font-size: 11px;
}

.dialog header {
    display: flex;
    align-items: center;
    justify-content: space-between;
    height: 30px;
    padding: 0 9px 0 8px;
    background: #fff;
    color: #8c8c8c;
}

.dialog h2 {
    font-family: "Open Sans", sans-serif;
    font-size: 13px;
}

.panels {
    display: flex;
    gap: 6px;
    padding: 5px 5px 0 4px;
}

.orders {
    width: 222px;
}

.buttons {
    display: flex;
    justify-content: space-between;
    height: 84px;
}

.col {
    display: flex;
    flex-direction: column;
    justify-content: space-between;
}

.best { width: 84px; margin-right: 11px; }
.market { width: 50px; margin-right: 12px; }
.delete { width: 65px; }

.col button, .reverse {
    height: 20px;
    border: 1px solid #404040;
    background: #d0d0d0;
    font-size: 12px;
}

.col .close, .col .tall {
    height: 24px;
}

.col .close {
    background: #ff0000;
    border-color: #700000;
    font-size: 11px;
    font-weight: bold;
}

.col .sell {
    background: #ff7f50;
    border-color: #702000;
}

.col .buy {
    background: #1e90ff;
    border-color: #083868;
}

.best button.sell, .best button.buy {
    height: 35px;
    font-size: 10px;
    line-height: 13px;
}

.reverse {
    width: 65px;
    margin-left: auto;
    font-size: 11px;
}

.line {
    display: flex;
    align-items: center;
    gap: 8px;
}

.dialog .volume {
    gap: 0;
    margin-top: 10px;
}

.volume label {
    width: 88px;
}

.stops {
    display: grid;
    grid-template-columns: 42px 65px 50px 65px;
    align-items: center;
    margin-top: 10px;
}

.stops .tp {
    padding-left: 6px;
}

.dialog label {
    display: flex;
    align-items: center;
    gap: 4px;
    white-space: nowrap;
}

.dialog .spin input {
    font-size: 12px;
}

.dialog input[type="checkbox"], .dialog input[type="radio"] {
    flex: none;
    width: 13px;
    height: 13px;
    margin: 0;
    appearance: none;
    border: 1px solid #333;
    background: #fff;
}

.dialog input[type="checkbox"]:checked::before {
    content: "";
    display: block;
    width: 8px;
    height: 4px;
    margin: 2px 0 0 1px;
    border-left: 1px solid #333;
    border-bottom: 1px solid #333;
    transform: rotate(-45deg);
}

.dialog input[type="radio"] {
    border-radius: 50%;
}

.dialog input[type="radio"]:checked {
    background: radial-gradient(#333 3px, #fff 4px);
}

.dialog fieldset {
    min-width: 0;
    margin: 0;
    padding: 0 5px;
    border: 1px solid #dcdcdc;
}

.dialog legend {
    padding: 0 3px;
    font-size: 11px;
    line-height: 13px;
}

.limits {
    width: 212px;
}

.limits fieldset {
    height: 121px;
    padding-top: 3px;
}

.limits .line {
    height: 22px;
}

.limits .line:first-of-type {
    margin-top: 3px;
}

.limits .pre {
    width: 96px;
}

.take {
    margin: 8px 0 0 9px;
}

.trailing {
    display: grid;
    grid-template-columns: 60px 50px 65px 58px 65px 72px 65px;
    align-items: center;
    margin: 6px 0 0 5px;
}

.trailing b {
    color: #006400;
}

.trailing label {
    justify-content: center;
}

.signals {
    padding-top: 9px;
}

.signals fieldset {
    width: 222px;
    height: 118px;
    padding: 1px 6px 0 6px;
}

.signals fieldset + fieldset {
    width: 212px;
}

.signals .line {
    height: 24px;
}

.c1 {
    width: 65px;
}

.c2 {
    width: 133px;
}

.dialog .near {
    margin-left: -6px;
}

.dialog .on {
    color: #006400;
    font-size: 13px;
    font-weight: bold;
}

.dialog .combined {
    margin: 9px 5px 8px 4px;
}
```
FILE: script.js
```js
var NS = 'http://www.w3.org/2000/svg';

function add(parent, tag, attrs, text) {
    var el = document.createElementNS(NS, tag);
    for (var k in attrs) el.setAttribute(k, attrs[k]);
    if (text !== undefined) el.textContent = text;
    parent.appendChild(el);
    return el;
}

function rect(p, x, y, w, h, fill, stroke) {
    return add(p, 'rect', stroke
        ? {x: Math.round(x) + 0.5, y: Math.round(y) + 0.5, width: w - 1, height: h - 1, fill: fill, stroke: stroke}
        : {x: Math.round(x), y: Math.round(y), width: w, height: h, fill: fill});
}

/* small square buttons above the charts */
var glyphs = {
    cross: '<path d="M2 6.500h9M6.500 2v9" stroke="#000" stroke-width="1.500"/>',
    minus: '<path d="M2 6.500h9" stroke="#000" stroke-width="2"/>',
    bar: '<path d="M6.500 2v9" stroke="#000" stroke-width="1.500"/>',
    slash: '<path d="M3 11l7-9" stroke="#000" stroke-width="1.500"/>',
    prof: '<path d="M2 2.500h5M2 4.500h8M2 6.500h6M2 8.500h9M2 10.500h5M2.500 1v11" stroke="#000"/>',
    proff: '<path d="M1 2.500h11M1 4.500h11M1 6.500h5" stroke="#777"/><path d="M7.500 12V5.500h4M7 8.500h4" stroke="#000" stroke-width="1.500" fill="none"/>',
    dot: '<circle cx="6.500" cy="6.500" r="4" fill="#000"/>',
    ph: '<path d="M3.500 11V2.500h4v4h-4M7.500 6v5M7.500 8h3v3" stroke="#000" fill="none"/>',
    arrow: '<path d="M1 6.500h9M7 3l4 3.500L7 10z" stroke="#000" stroke-width="1.500"/>',
    beam: '<path d="M3 1.500h7M3 11.500h7M6.500 2v9M4 2l2.500 3L9 2zM4 11l2.500-3L9 11z" stroke="#000"/>'
};
var tools = [['cross', 1], 'H', ['minus'], ['bar'], ['slash'], ['prof'], ['proff'], ['dot'], 'P', ['ph'], 'C', 'fold'];
var chipSets = {
    left: tools,
    right: tools.map(function (t) { return t[0] === 'dot' ? ['dot', 1] : t; }),
    'modes-left': ['A', ['arrow', 1], ['beam', 1], ['M', 1]],
    'modes-right': ['A', ['arrow', 1], ['beam', 1], 'M']
};
document.querySelectorAll('[data-chips]').forEach(function (box) {
    chipSets[box.dataset.chips].forEach(function (c) {
        var name = typeof c === 'string' ? c : c[0];
        var b = document.createElement('button');
        if (c[1] === 1) b.className = 'on';
        if (name === 'fold') {
            b.className = 'fold';
            b.innerHTML = '<svg viewBox="0 0 13 13"><path d="M.5 0v13M5 2v9L2 6.500z" stroke="#000" fill="none"/></svg>';
        } else if (glyphs[name]) {
            b.innerHTML = '<svg viewBox="0 0 13 13">' + glyphs[name] + '</svg>';
        } else {
            b.textContent = name;
        }
        box.appendChild(b);
    });
});

/* ---- left chart: footprint ---- */
var left = document.getElementById('plot-left');
function rowY(r) { return 8.3 + 15.04 * r; }

// right edge of each volume bar, optional divider
var outlined = {
    1: [73], 2: [126], 3: [107, 102], 4: [132], 5: [110, 102], 6: [199], 7: [155], 8: [141], 9: [190], 10: [203], 11: [299],
    35: [262], 36: [300], 37: [290], 38: [215, 131], 39: [242, 204], 40: [212, 201], 41: [201],
    42: [255, 167], 43: [213, 206], 44: [271, 200], 45: [160, 136]
};
var plain = {
    12: [414], 13: [434, 391], 14: [415], 15: [437], 16: [500], 17: [590], 18: [560], 19: [600], 20: [626, 602], 21: [602], 22: [646],
    23: [618, 592], 24: [620, 586], 25: [679], 26: [550], 27: [520], 28: [490], 29: [535, 513], 30: [619, 518],
    31: [552, 537], 32: [493], 33: [426], 34: [250]
};
var r, d;
for (r in outlined) {
    d = outlined[r];
    rect(left, 0, rowY(r) - 6, d[0], 13, '#dadada', '#b0b0b0');
    if (d[1]) rect(left, d[1], rowY(r) - 6, 1, 13, '#b0b0b0');
}
for (r in plain) {
    d = plain[r];
    rect(left, 0, rowY(r) - 5, d[0], 11, '#d8d8d8');
    if (d[1]) rect(left, d[1], rowY(r) - 5, 1, 11, '#cccccc');
}
rect(left, 415, 183, 287, 13, '#cfc1b0', '#a08868');
rect(left, 262, 513, 440, 13, '#cfc1b0', '#a08868');
rect(left, 0, 243, 690, 13, '#aecd6b', '#5c8c14');
rect(left, 0, 204, 2000, 1, '#78889a');

// start row, cells (g/r text, B blue / P purple back), side bar, imbalance boxes
var footprint = [
    [37, '8g 95gB 384g 487r 370r 125r 131r 30r', 'c', 37, 41],
    [34, '83gB 181gB 572g 203g 405r 194g 12r', 'c', 34, 37, 'g2 g5'],
    [28, '238gB 379r 445gB 293r 77gB 109gB 236r', 'c', 30, 34, 'g3 g4'],
    [27, '12g 106gB 285g 599gB 416r 352r 5r', 'c', 27, 30, 'g5'],
    [24, '7g 219g 284gB 354r 288g 410r 203g 27r', 'r', 27, 31, 'r0 g6'],
    [30, '206g 608g 781r 184rP', 'r', 31, 31],
    [30, '47gB 138r 133rP 35r 306g 256r 206rP 246r 301r 19r', 'r', 31, 39, 'r3 r6 g8'],
    [35, '56gB 266g 470r 305g 155r 306g 130rP', 'c', 39, 39],
    [34, '98gB 323r 110rP 206gB 216g 297gB 171r 211g 53rP', 'c', 35, 39],
    [35, '40r 195r 306g 229g 195g 353g 224rP 103rP', 'r', 35, 37, 'r0'],
    [32, '296gB 313g 400g 540g 145g 35r 43g 3g', 'c', 32, 37, 'g3 g4 g6'],
    [27, '205gB 225g 208r 288g 481r 193r', 'c', 27, 32, 'g0'],
    [27, '358g 381r 474g 390gB 161rP 7r', 'k', 27, 27, 'g2 g4'],
    [20, '104g 243gB 313g 84gB 199gB 423g 240r 84g', 'c', 22, 27, 'g2 g3'],
    [17, '35gB 157g 294g 404g 130g 517g 224r 15g', 'c', 18, 22, 'g3 g6'],
    [12, '59gB 254g 285g 210g 319g 396r 86rP', 'c', 17, 18],
    [14, '2g 217r 239g 463g 620r 6r', 'r', 17, 18, 'r0 g4'],
    [17, '1g 373r 669r 436r 181r', 'r', 18, 20, 'r0'],
    [13, '50gB 85g 79gB 253gB 349g 338r 339g 133g', 'c', 13, 20, 'g1 g6']
];
var side = {c: '#00d0d0', r: '#e0143c', k: '#000'};
footprint.forEach(function (f, i) {
    var x = 5 + 37 * i, cells = f[1].split(' '), h = Math.round(15.04 * cells.length);
    rect(left, x - 2, rowY(f[3]) - 7, 3, Math.round((f[4] - f[3]) * 15.04 + 13), side[f[2]]);
    rect(left, x, rowY(f[0]) - 8, 35, h + 1, '#fff', '#000');
    cells.forEach(function (c, n) {
        var y = rowY(f[0] + n), m = c.match(/(\d+)([gr])([BP]?)/);
        if (m[3]) rect(left, x + 1, y - 6, 33, 13, m[3] === 'B' ? '#a2cbdb' : '#cbc5e5');
        add(left, 'text', {'class': 'cell', x: x + 17, y: Math.round(y) + 4, fill: m[2] === 'g' ? '#004000' : '#500c0c'}, m[1]);
    });
    (f[5] ? f[5].split(' ') : []).forEach(function (b) {
        var y = rowY(f[0] + +b.slice(1)), g = b[0] === 'g';
        rect(left, x - 1, y, 35, 16, g ? 'rgba(0,100,0,.2)' : 'rgba(255,60,60,.33)', g ? '#008000' : '#cc5050');
    });
});
rect(left, 0, 560, 3, 132, '#fff', '#000');
add(left, 'path', {d: 'M698 0h11l-5.500 6z'});
add(left, 'text', {'class': 'clock', x: 712, y: 222}, '18:00:48');
add(left, 'text', {'class': 'clock', x: 712, y: 235}, '5');
// settings tool
var wrench = add(left, 'g', {transform: 'translate(3 693)', fill: 'none', 'stroke-linecap': 'round'});
add(wrench, 'path', {d: 'M3 14L13 4', stroke: '#666', 'stroke-width': 4});
add(wrench, 'path', {d: 'M3 14L13 4', stroke: '#eee', 'stroke-width': 2});
add(wrench, 'path', {d: 'M2 2l8 8', stroke: '#999', 'stroke-width': 2});
add(wrench, 'path', {d: 'M10 10l5 5', stroke: '#e8b820', 'stroke-width': 4});

/* ---- price scales ---- */
function axis(id, first, top, step, count, minor, covered) {
    var svg = document.getElementById(id);
    rect(svg, 0, 0, 1, 714, '#000');
    for (var i = 0; i < count; i++) {
        var y = top + step * i;
        for (var m = 1; m <= minor; m++) rect(svg, 1, y + step * m / (minor + 1), 5, 1, '#b4b4b4');
        rect(svg, 1, y, 12, 1, '#000');
        if (first - i !== covered) add(svg, 'text', {'class': 'end', x: 74, y: Math.round(y) + 4}, (first - i) + '.00');
    }
    return svg;
}
function tag(svg, y, text) {
    add(svg, 'path', {d: 'M5 ' + y + 'l12-8h61v17H17z', fill: '#808080'});
    add(svg, 'text', {'class': 'tag', x: 74, y: y + 5}, text);
}
var axisL = axis('axis-left', 4381, 8, 30.08, 24, 1);
tag(axisL, 204, '4374.50');
var axisR = axis('axis-right', 4391, -0.8, 13.8, 45, 3, 4374);
rect(axisR, 0, 230, 6, 1, '#78889a');
tag(axisR, 230, '4374.25');
rect(axisR, 0, 615, 80, 1, '#000');
rect(axisR, 0, 677, 13, 1, '#eee');
rect(axisR, 15, 669, 52, 17, '#808080', '#fff');
add(axisR, 'text', {'class': 'end', x: 63, y: 682, fill: '#fff'}, '1207');

/* ---- right chart: candles ---- */
var right = document.getElementById('plot-right');
function tickY(t) { return 220.3 + 3.45 * t; }
function barX(i) { return Math.round(3.3 + 10.32 * i); }

// horizontal volume, one line per tick
var profTop = [4, 6, 7, 10, 14, 18, 46, 30, 20, 26, 22, 28, 36, 60, 84, 44, 36, 42, 50, 60, 58, 66, 74, 110, 98, 86, 104, 96, 98, 112, 100, 144, 130, 140, 150, 170, 160, 178, 150, 200, 255, 206];
var profLow = [298, 258, 249, 266, 251, 228, 239, 165, 206, 191, 243, 237, 167, 192, 211, 164, 168, 208, 250, 205, 160, 142, 118, 81, 68, 60, 79, 72, 47, 34, 34, 30, 38, 26, 24, 28, 20, 22, 16, 20, 14, 18, 12, 15, 10, 13, 9, 6];
profTop.forEach(function (w, i) { rect(right, 0, tickY(i - 42), w, 1, '#b0b0b0'); });
profLow.forEach(function (w, i) { rect(right, 0, tickY(i + 46), w, 1, '#b0b0b0'); });

rect(right, 320, 220, 459, 1, '#a08868');
rect(right, 0, 289, 779, 1, '#5c8c14');
rect(right, 247, 375, 532, 1, '#a08868');
rect(right, 0, 230, 2000, 1, '#78889a');

// bar, tick, radius, colour
[[1, 17, 5, '#a4e4e6'], [5, 27, 5, '#f6cccc'], [13, 14, 5, '#8cdcdc'], [15, 23, 6, '#f8d4d4'], [24, 37, 5, '#f6b4b4'],
    [26, 43, 7, '#f8bcbc'], [28, 41, 5, '#fff0f0'], [30, 63, 14, '#f29a9a'], [32, 58, 9, '#d0f2f2'], [35, 54, 7, '#fde8e8'],
    [40, 35, 11, '#ace2e4'], [42, 36, 6, '#fde4e4'], [44, 32, 7, '#f6b4b4'], [53, 56, 8, '#dcf6f6'], [56, 46, 8, '#98dcdc'],
    [58, 48, 7, '#c4eeee'], [61, 39, 9, '#84d8d8'], [66, 16, 17, '#8cdada'], [70, 13, 10, '#fdeeee'], [73, 13, 8, '#80d8d8']
].forEach(function (c) {
    add(right, 'circle', {cx: barX(c[0]), cy: tickY(c[1]), r: c[2], fill: c[3], stroke: c[2] > 10 ? (c[0] === 30 ? '#ff8c8c' : '#80f4f4') : c[3]});
});

// high, body top, body bottom, low in ticks below 4375
var candles = '21 24 25 28 r,17 17 26 27 g,16 16 17 20 g,14 16 16 20 g,15 17 21 23 r,20 22 27 30 r,19 19 27 27 g,14 19 20 22 r,18 19 20 21 g,15 17 19 19 g,15 18 19 19 r,16 18 19 20 g,14 14 18 24 g,6 13 14 14 r,13 14 17 18 r,12 17 23 24 r,24 24 30 31 r,22 22 30 30 g,21 21 24 27 r,20 23 23 25 r,22 24 29 29 r,23 25 29 29 g,26 26 29 30 r,24 28 32 36 r,32 32 37 39 r,32 35 37 38 g,35 36 43 44 r,40 40 44 46 g,36 40 41 47 r,41 41 51 51 r,50 50 63 68 r,61 63 63 69 r,53 58 64 65 g,57 58 67 69 r,56 56 66 67 g,53 54 55 63 g,52 54 57 58 r,48 49 57 57 g,46 48 52 55 r,40 40 51 52 g,32 35 40 40 g,35 35 35 40 r,33 34 36 41 r,28 29 35 38 g,25 29 32 34 r,30 33 34 37 r,33 34 36 39 r,35 37 38 40 r,36 38 39 40 r,37 38 39 42 g,36 37 38 43 g,36 36 46 48 r,44 46 50 51 r,49 49 56 58 r,46 48 56 56 g,48 48 57 58 r,45 46 58 59 g,43 46 56 57 r,48 48 56 60 g,47 49 49 52 g,43 43 48 49 g,39 39 44 48 g,35 39 39 40 g,29 31 39 40 g,29 32 32 34 g,24 27 32 38 g,15 16 27 27 g,6 7 16 17 g,0 7 10 12 r,8 9 10 12 g,5 8 13 14 r,11 11 13 16 g,10 11 17 18 r,12 13 17 17 g,8 9 12 15 g,2 3 8 12 g';
candles.split(',').forEach(function (s, i) {
    var c = s.split(' '), x = barX(i), top = Math.round(tickY(c[1])), bot = Math.round(tickY(c[2])), hi = Math.round(tickY(c[0]));
    rect(right, x, hi, 1, Math.round(tickY(c[3])) - hi + 1, '#000');
    if (top === bot) rect(right, x - 4, top, 9, 1, '#000');
    else rect(right, x - 4, top, 9, bot - top + 1, c[4] === 'g' ? '#46d246' : '#dc1010', '#000');
});

// volumes from bar 42 on
'22r 19g 30r 19g 14g 15g 12r 14g 16g 23r 24r 39g 33g 35g 38g 29r 32g 16g 25g 41g 28r 41g 53r 61g 92g 72g 61r 24g 50r 30g 35r 35g 28g 35g'.split(' ').forEach(function (v, i) {
    var h = parseInt(v, 10);
    rect(right, barX(i + 42) - 4, 712 - h, 9, h, v.slice(-1) === 'g' ? '#006400' : '#9c0000');
});
rect(right, 0, 615, 2000, 1, '#000');
add(right, 'path', {d: 'M776 0h11l-5.500 6z'});
add(right, 'text', {'class': 'clock', x: 789, y: 248}, '18:00:48');
add(right, 'text', {'class': 'clock end', x: 839, y: 261}, '02:12');

/* ---- time scales ---- */
function times(id, list, from, to) {
    var svg = document.getElementById(id);
    rect(svg, from, 2, to - from, 15, 'none', '#000');
    list.forEach(function (t) { add(svg, 'text', {'class': 'mid', x: t[1], y: 14}, t[0]); });
}
times('time-left', [['11:07', 75], ['11:26', 165], ['11:47', 255], ['12:07', 345], ['12:21', 435], ['12:34', 525], ['12:40', 615]], 593, 700);
times('time-right', [['11:42', 512], ['12:09', 602], ['12:36', 692]], 583, 780);
```
